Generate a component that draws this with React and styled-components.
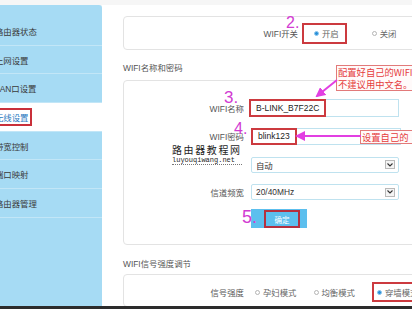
import React from "react";
import styled, { createGlobalStyle } from "styled-components";

const GlobalStyle = createGlobalStyle`
  html, body {
    margin: 0;
    padding: 0;
    background: #ffffff;
  }
  body {
    font-family: "Liberation Sans", "Noto Sans CJK SC", sans-serif;
  }
`;

const Page = styled.div`
  position: relative;
  width: 412px;
  height: 309px;
  overflow: hidden;
  display: grid;
  grid-template-rows: 5px 1fr 3px;
  background: #f6f6f6;
`;

const Body = styled.div`
  display: grid;
  grid-template-columns: 102px 1fr;
  min-height: 0;
`;

const BottomBar = styled.div`
  background: #2c2c2c;
`;

const Sidebar = styled.nav`
  background: #a6dbf4;
  border-top-right-radius: 3px;
  padding-top: 12px;
  overflow: hidden;
`;

const NavItem = styled.div`
  height: 28.7px;
  box-sizing: border-box;
  border-bottom: 1px solid #c2e6f7;
  display: flex;
  align-items: center;
  font-size: 8.4px;
  color: ${(p) => (p.$active ? "#2a78c0" : "#3a3a3a")};
  background: ${(p) => (p.$active ? "#ffffff" : "transparent")};
  span {
    margin-left: -5px;
    white-space: nowrap;
  }
`;

const ActiveMark = styled.span`
  border: 2px solid #c9303a;
  padding: 1px 1px 1px 0;
  margin-left: -7px !important;
`;

const Main = styled.main`
  background: #ffffff;
  padding: 11px 0 0 21px;
  overflow: hidden;
  min-height: 0;
`;

const Card = styled.section`
  box-sizing: border-box;
  width: 320px;
  border: 1px solid #e3e3e3;
  border-radius: 4px;
  background: #ffffff;
  padding: ${(p) => p.$pad || "0"};
  height: ${(p) => (p.$h ? `${p.$h}px` : "auto")};
  display: flex;
  flex-direction: column;
  justify-content: ${(p) => (p.$center ? "center" : "flex-start")};
`;

const SectionTitle = styled.h3`
  margin: ${(p) => p.$mt}px 0 ${(p) => p.$mb}px 0;
  font-weight: normal;
  font-size: 8.4px;
  line-height: 12px;
  color: #555;
`;

const Row = styled.div`
  position: relative;
  display: grid;
  grid-template-columns: ${(p) => p.$label}px auto;
  column-gap: ${(p) => p.$gap ?? 6}px;
  align-items: center;
  height: ${(p) => p.$h ?? 29}px;
`;

const Label = styled.label`
  text-align: right;
  font-size: 8.4px;
  color: #555;
  white-space: nowrap;
`;

const Field = styled.div`
  box-sizing: border-box;
  width: 150px;
  height: ${(p) => p.$h ?? 18}px;
  border: 1px solid #bfe2ef;
  display: flex;
  align-items: stretch;
  font-size: 8.5px;
  color: #222;
`;

const Mark = styled.span`
  box-sizing: border-box;
  margin: -1px 0 -1px -1px;
  border: 2px solid #cc3a3f;
  padding: 0 5px;
  display: inline-flex;
  align-items: center;
  white-space: nowrap;
`;

const Select = styled.div`
  box-sizing: border-box;
  width: 148px;
  height: 16px;
  border: 1px solid #bfe2ef;
  border-radius: 2px;
  display: flex;
  align-items: center;
  justify-content: space-between;
  padding: 0 3px 0 4px;
  font-size: 8.4px;
  color: #333;
`;

const Caret = styled.span`
  box-sizing: border-box;
  width: 10px;
  height: 9px;
  border: 1px solid #b9b9b9;
  background: #f4f4f4;
  display: flex;
  align-items: center;
  justify-content: center;
`;

const Button = styled.div`
  box-sizing: border-box;
  width: 56px;
  height: 19px;
  background: #5cbfee;
  display: flex;
  align-items: stretch;
  padding-left: 13px;
`;

const ButtonMark = styled.span`
  box-sizing: border-box;
  width: 36px;
  margin-top: 1px;
  border: 2px solid #b5303f;
  display: flex;
  align-items: center;
  justify-content: center;
  font-size: 7.5px;
  color: #fff;
`;

const Radios = styled.div`
  display: flex;
  align-items: center;
  gap: ${(p) => p.$gap}px;
`;

const Option = styled.span`
  box-sizing: border-box;
  display: inline-flex;
  align-items: center;
  gap: 3px;
  font-size: 8.4px;
  color: #666;
  white-space: nowrap;
  height: ${(p) => (p.$marked ? `${p.$mh || 21}px` : "auto")};
  padding: ${(p) => (p.$marked ? `0 6px 0 ${p.$pl ?? 10}px` : "0")};
  border: ${(p) => (p.$marked ? "2px solid #cc3a3f" : "none")};
`;

const Dot = styled.i`
  display: inline-block;
  box-sizing: border-box;
  width: 5px;
  height: 5px;
  border-radius: 50%;
  background: ${(p) => (p.$on ? "#2a8fd8" : "#fff")};
  border: 1px solid ${(p) => (p.$on ? "#8cc7ee" : "#b5b5b5")};
`;

const Step = styled.span`
  position: absolute;
  left: ${(p) => p.$x}px;
  top: ${(p) => p.$y}px;
  font-family: "Liberation Sans", sans-serif;
  font-size: ${(p) => p.$size || 16}px;
  line-height: 1;
  color: #d23bd2;
`;

const Note = styled.div`
  position: absolute;
  left: ${(p) => p.$x}px;
  top: ${(p) => p.$y}px;
  width: 110px;
  box-sizing: border-box;
  border: 1px solid #e27a7a;
  background: #fffafa;
  padding: 0 0 0 1px;
  font-family: "Noto Sans CJK SC", sans-serif;
  font-size: 9.3px;
  line-height: 12px;
  color: #e53c3c;
  white-space: nowrap;
`;

const Watermark = styled.div`
  position: absolute;
  left: 172px;
  top: 145px;
  color: #1e1e1e;
  line-height: 1;
  .cn {
    font-family: "Noto Sans CJK SC", sans-serif;
    font-size: 10px;
    letter-spacing: 1.6px;
  }
  .en {
    margin-top: 2px;
    font-family: "Liberation Mono", monospace;
    font-size: 7px;
    border-bottom: 1px dotted #777;
  }
`;

const Arrows = styled.svg`
  position: absolute;
  left: 0;
  top: 0;
  pointer-events: none;
`;

const navItems = ["路由器状态", "上网设置", "LAN口设置", "无线设置", "带宽控制", "端口映射", "路由器管理"];

function Chevron() {
  return (
    <svg width="6" height="4" viewBox="0 0 6 4">
      <path d="M0.5 0.5 L3 3 L5.5 0.5" fill="none" stroke="#333" strokeWidth="1.1" />
    </svg>
  );
}

export default function App() {
  return (
    <>
      <GlobalStyle />
      <Page>
        <div />
        <Body>
          <Sidebar>
            {navItems.map((item) => (
              <NavItem key={item} $active={item === "无线设置"}>
                {item === "无线设置" ? <ActiveMark>{item}</ActiveMark> : <span>{item}</span>}
              </NavItem>
            ))}
          </Sidebar>
          <Main>
            <Card $h={34} $center>
              <Row $label={174} $gap={4} $h={34}>
                <Label>WIFI开关</Label>
                <Radios $gap={25}>
                  <Option $marked>
                    <Dot $on />
                    开启
                  </Option>
                  <Option>
                    <Dot />
                    关闭
                  </Option>
                </Radios>
                <Step $x={162} $y={-2}>2.</Step>
              </Row>
            </Card>

            <SectionTitle $mt={12} $mb={6}>WIFI名称和密码</SectionTitle>
            <Card $pad="12px 0">
              <Row $label={120} $gap={5}>
                <Label>WIFI名称</Label>
                <Field>
                  <Mark>B-LINK_B7F22C</Mark>
                </Field>
                <Step $x={100} $y={-4} $size={17}>3.</Step>
              </Row>
              <Row $label={120} $gap={7} $h={28}>
                <Label>WIFI密码</Label>
                <Field $h={17}>
                  <Mark>blink123</Mark>
                </Field>
                <Step $x={110} $y={-1} $size={16}>4.</Step>
              </Row>
              <Row $label={120} $gap={7}>
                <Label />
                <Select>
                  自动
                  <Caret>
                    <Chevron />
                  </Caret>
                </Select>
              </Row>
              <Row $label={120} $gap={7} $h={26}>
                <Label>信道频宽</Label>
                <Select>
                  20/40MHz
                  <Caret>
                    <Chevron />
                  </Caret>
                </Select>
              </Row>
              <Row $label={120} $gap={7} $h={27}>
                <Label />
                <Button>
                  <ButtonMark>确定</ButtonMark>
                </Button>
                <Step $x={118} $y={3} $size={18}>5.</Step>
              </Row>
            </Card>

            <SectionTitle $mt={13} $mb={4}>WIFI信号强度调节</SectionTitle>
            <Card $h={33} $pad="3px 0 0 0" $center>
              <Row $label={120} $gap={11} $h={26}>
                <Label>信号强度</Label>
                <Radios $gap={17}>
                  <Option>
                    <Dot />
                    孕妇模式
                  </Option>
                  <Option>
                    <Dot />
                    均衡模式
                  </Option>
                  <Option $marked $mh={20} $pl={3}>
                    <Dot $on />
                    穿墙模式
                  </Option>
                </Radios>
              </Row>
            </Card>
          </Main>
        </Body>
        <BottomBar />

        <Note $x={336} $y={65}>
          配置好自己的WIFI
          <br />
          不建议用中文名。
        </Note>
        <Note $x={360} $y={130}>设置自己的</Note>
        <Watermark>
          <div className="cn">路由器教程网</div>
          <div className="en">luyouqiwang.net</div>
        </Watermark>
        <Arrows width="412" height="309" viewBox="0 0 412 309">
          <defs>
            <marker id="head" viewBox="0 0 10 10" refX="8" refY="5" markerWidth="5" markerHeight="5" orient="auto">
              <path d="M0 0 L10 5 L0 10 z" fill="#e23fe2" />
            </marker>
          </defs>
          <line x1="337" y1="80" x2="317" y2="96" stroke="#e23fe2" strokeWidth="2" markerEnd="url(#head)" />
          <line x1="361" y1="136" x2="297" y2="136" stroke="#e23fe2" strokeWidth="2" markerEnd="url(#head)" />
        </Arrows>
      </Page>
    </>
  );
}
